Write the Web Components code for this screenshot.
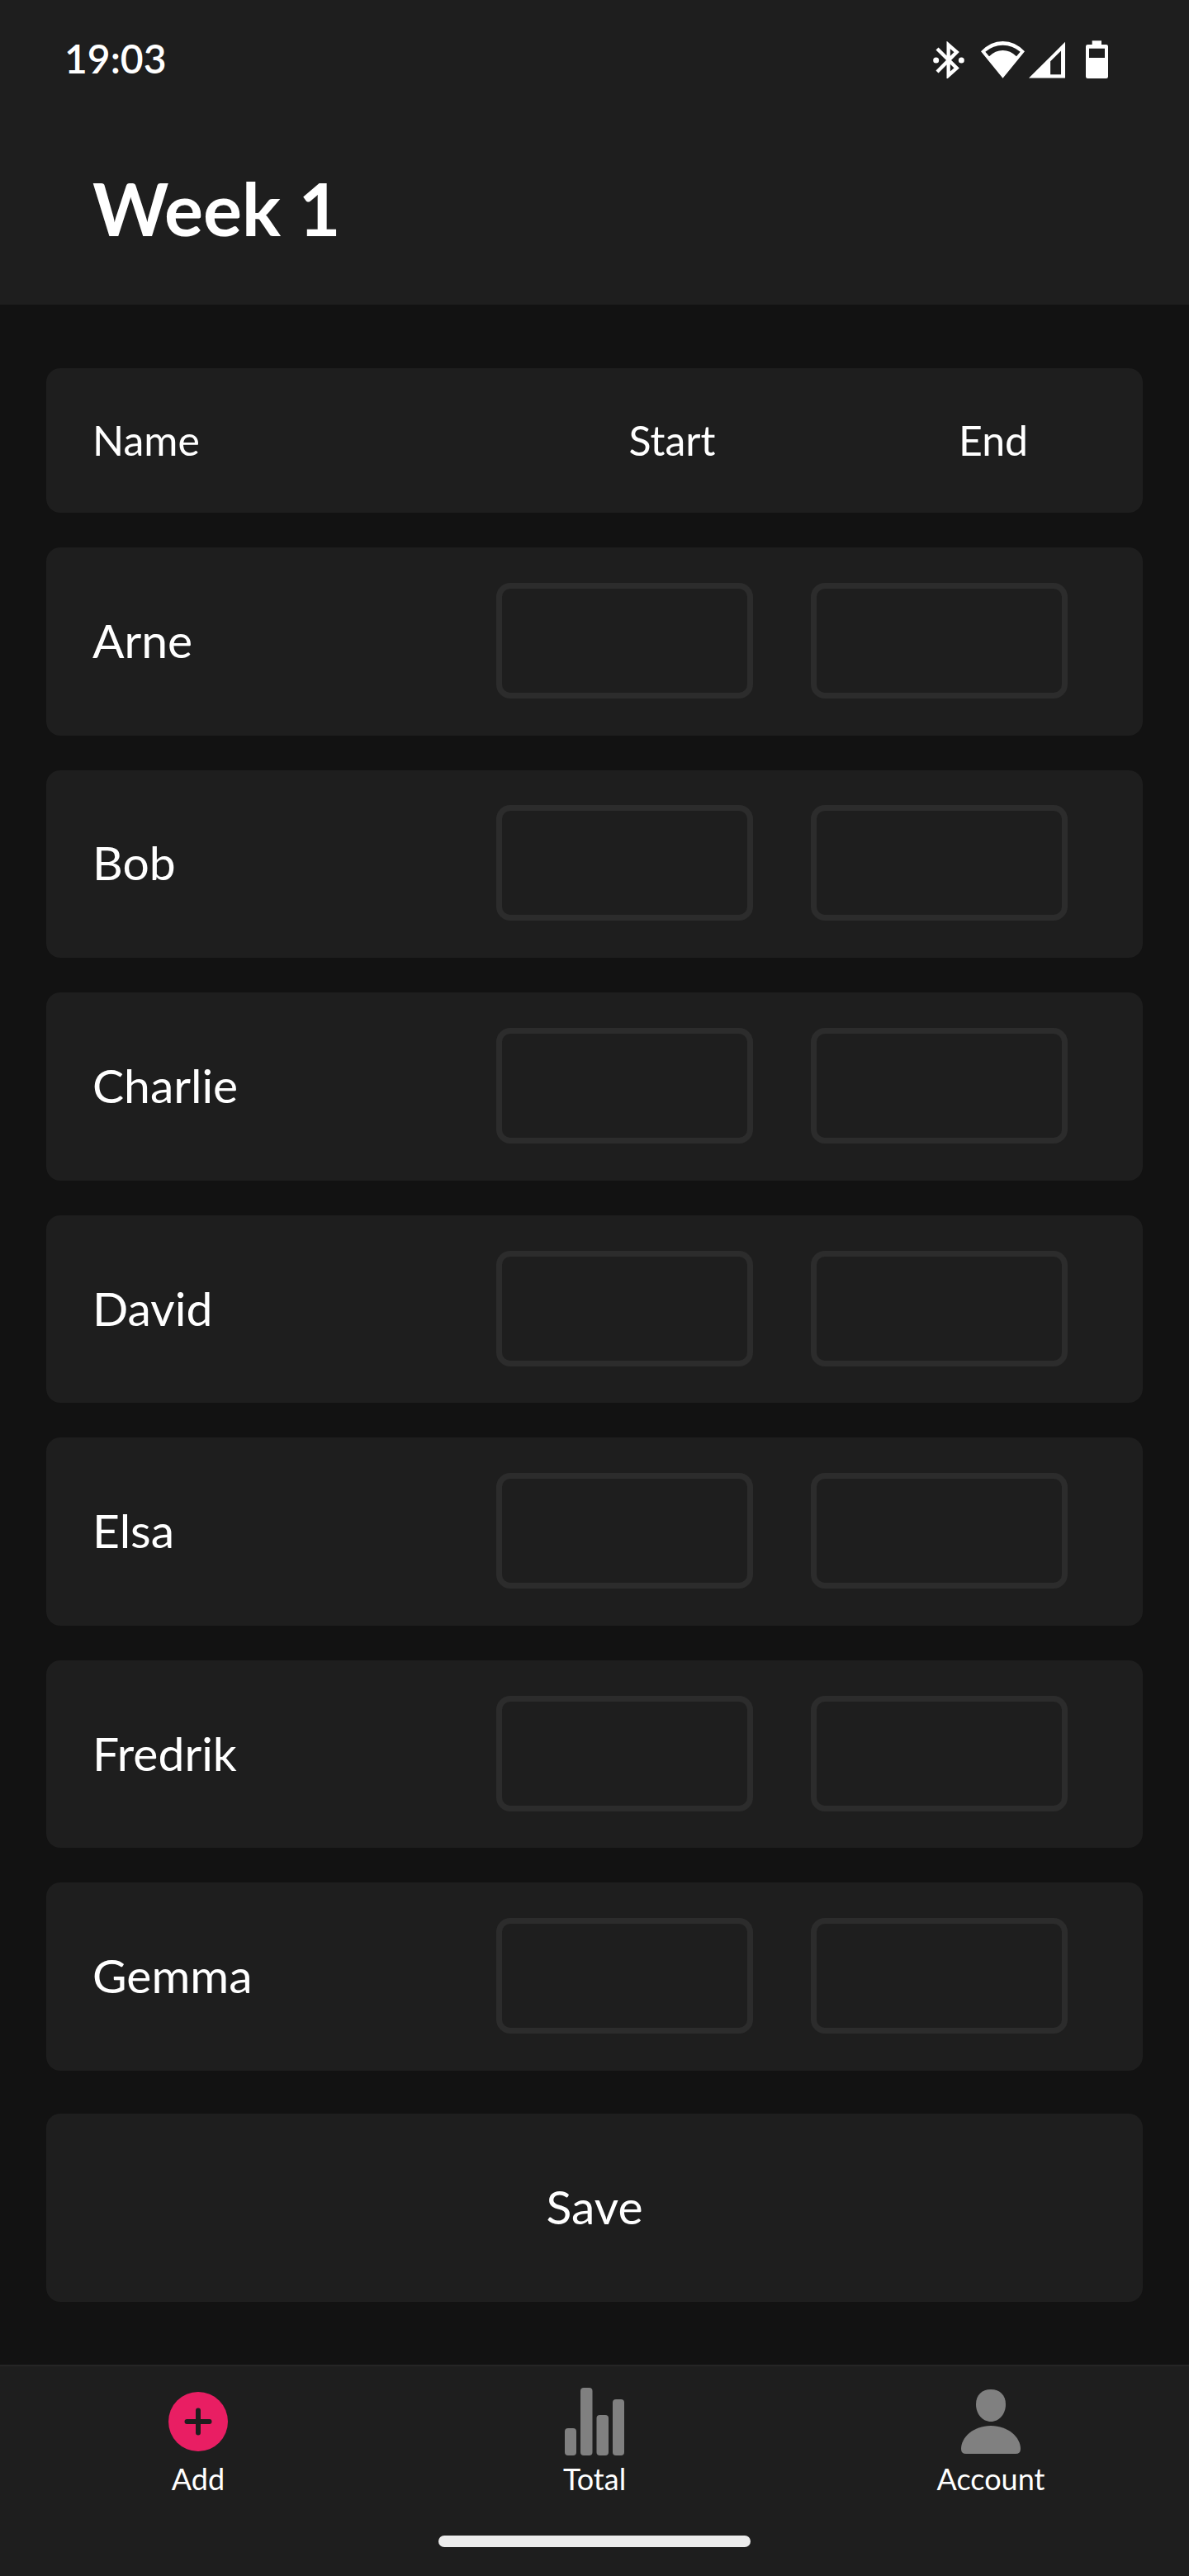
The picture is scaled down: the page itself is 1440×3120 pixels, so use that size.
<!DOCTYPE html>
<html lang="en">
<head>
<meta charset="utf-8">
<meta name="viewport" content="width=device-width, initial-scale=1">
<title>Week 1</title>
<style>
  :root {
    --bg: #121212;
    --surface: #1e1e1e;
    --line: #2c2c2c;
    --accent: #e91e63;
    --muted: #808080;
    --radius: 17px;
  }
  body {
    margin: 0;
    background: var(--bg);
    color: #fff;
    font-family: Lato, "Open Sans", sans-serif;
  }
</style>
</head>
<body>
<week-app>
  <status-bar slot="top" time="19:03"></status-bar>
  <app-title slot="top">Week 1</app-title>
  <column-heads></column-heads>
  <score-row name="Arne"></score-row>
  <score-row name="Bob"></score-row>
  <score-row name="Charlie"></score-row>
  <score-row name="David"></score-row>
  <score-row name="Elsa"></score-row>
  <score-row name="Fredrik"></score-row>
  <score-row name="Gemma"></score-row>
  <save-button slot="action">Save</save-button>
  <tab-bar slot="bottom">
    <tab-item href="#add" current>
      <svg slot="icon" width="72" height="84" viewBox="0 0 72 84" aria-hidden="true">
        <circle cx="36" cy="43" r="36" fill="#e91e63"/>
        <path d="M36 29.500V56.500M22.500 43H49.500" stroke="#1e1e1e" stroke-width="6" stroke-linecap="round"/>
      </svg>
      Add
    </tab-item>
    <tab-item href="#total">
      <svg slot="icon" width="72" height="84" viewBox="0 0 72 84" fill="#808080" aria-hidden="true">
        <rect x="0" y="51" width="14" height="33" rx="4"/>
        <rect x="19" y="2" width="14.500" height="82" rx="4"/>
        <rect x="38.500" y="35" width="14.500" height="49" rx="4"/>
        <rect x="58" y="16" width="14" height="68" rx="4"/>
      </svg>
      Total
    </tab-item>
    <tab-item href="#account">
      <svg slot="icon" width="72" height="84" viewBox="0 0 72 84" fill="#808080" aria-hidden="true">
        <path d="M36 4C47 4 54 11 54 22C54 34 46 43 36 43S18 34 18 22C18 11 25 4 36 4Z"/>
        <path d="M36 48C57 48 72 62 72 76Q72 82 66 82H6Q0 82 0 76C0 62 15 48 36 48Z"/>
      </svg>
      Account
    </tab-item>
  </tab-bar>
</week-app>

<script>
  const define = (name, html, setup) => {
    const template = document.createElement('template');
    template.innerHTML = html;
    customElements.define(name, class extends HTMLElement {
      constructor() {
        super();
        this.attachShadow({ mode: 'open' }).append(template.content.cloneNode(true));
      }
      connectedCallback() {
        if (setup) setup(this, this.shadowRoot);
      }
    });
  };

  define('week-app', `
    <style>
      :host { display: flex; flex-direction: column; min-height: 100vh; }
      header, footer { background: var(--surface); }
      main {
        flex: 1; display: flex; flex-direction: column; gap: 52px;
        box-sizing: border-box; padding: 77px 56px 76px;
      }
      .rows {
        flex: 1; display: grid; gap: 42px;
        grid-template-rows: auto; grid-auto-rows: 1fr;
      }
    </style>
    <header><slot name="top"></slot></header>
    <main>
      <div class="rows"><slot></slot></div>
      <slot name="action"></slot>
    </main>
    <footer><slot name="bottom"></slot></footer>
  `);

  define('status-bar', `
    <style>
      :host {
        display: flex; align-items: center; justify-content: space-between;
        box-sizing: border-box; height: 144px; padding: 0 98px 0 78px;
      }
      time { font-size: 48px; line-height: 60px; font-weight: 600; padding-bottom: 2px; }
      .icons { display: flex; align-items: center; }
      .wifi { margin-left: 20px; }
      .signal { margin-left: 5px; }
      .battery { margin-left: 25px; }
      svg { display: block; }
    </style>
    <time></time>
    <div class="icons">
      <svg width="38" height="45" viewBox="90 60 114 135" role="img" aria-label="Bluetooth">
        <path d="M105 87L176 157L146 184V73L176 99L105 171" fill="none" stroke="#fff" stroke-width="13"/>
        <circle cx="101" cy="129" r="10.500" fill="#fff"/>
        <circle cx="193" cy="129" r="10.500" fill="#fff"/>
      </svg>
      <svg class="wifi" width="53" height="45" viewBox="264 60 159 135" role="img" aria-label="Wi-Fi">
        <path fill-rule="evenodd" fill="#fff" d="M343.500 194L264 97Q298 60 343.500 60T423 97ZM280 98L294 115Q316 93 343.500 93T393 115L407 98Q378 74 343.500 74T280 98Z"/>
      </svg>
      <svg class="signal" width="44" height="45" viewBox="437 60 133 135" role="img" aria-label="Mobile signal">
        <path fill-rule="evenodd" fill="#fff" d="M570 62V194H437ZM555 94L516 133V181H555Z"/>
      </svg>
      <svg class="battery" width="27" height="46" viewBox="645 56 81 138" role="img" aria-label="Battery">
        <path fill-rule="evenodd" fill="#fff" d="M668 57H702V71H719Q726 71 726 78V187Q726 194 719 194H652Q645 194 645 187V78Q645 71 652 71H668ZM657 85V119H714V85Z"/>
      </svg>
    </div>
  `, (el, root) => { root.querySelector('time').textContent = el.getAttribute('time'); });

  define('app-title', `
    <style>
      :host { display: block; padding: 56px 112px 65px; }
      h1 { margin: 0; font-size: 88px; line-height: 104px; font-weight: 700; }
    </style>
    <h1><slot></slot></h1>
  `);

  define('column-heads', `
    <style>
      :host {
        display: flex; align-items: center; box-sizing: border-box;
        height: 175px; padding: 0 56px 2px;
        background: var(--surface); border-radius: var(--radius);
        font-size: 50px; line-height: 60px;
      }
      .name { flex: 1; }
      .cell { flex: 0 1 250px; text-align: center; }
      .cell + .cell { margin-left: 139px; }
    </style>
    <span class="name">Name</span>
    <span class="cell">Start</span>
    <span class="cell">End</span>
  `);

  define('score-row', `
    <style>
      :host {
        display: flex; align-items: center; gap: 70px;
        box-sizing: border-box; padding: 41px 91px 43px 56px;
        background: var(--surface); border-radius: var(--radius);
      }
      label { flex: 1; font-size: 57px; line-height: 68px; padding-bottom: 2px; }
      input {
        flex: 0 1 311px; min-width: 0; width: 311px; height: 140px;
        box-sizing: border-box; margin: 0; padding: 0 28px;
        border: 7px solid var(--line); border-radius: var(--radius);
        background: transparent; color: inherit; font: inherit;
        font-size: 50px; text-align: center; outline: none;
      }
      input:focus { border-color: var(--accent); }
    </style>
    <label for="start"></label>
    <input id="start" type="text" inputmode="numeric">
    <input id="end" type="text" inputmode="numeric">
  `, (el, root) => {
    const name = el.getAttribute('name');
    root.querySelector('label').textContent = name;
    root.querySelector('#start').setAttribute('aria-label', name + ' start');
    root.querySelector('#end').setAttribute('aria-label', name + ' end');
  });

  define('save-button', `
    <style>
      :host { display: block; }
      button {
        display: block; width: 100%; height: 228px; margin: 0; padding: 0 0 4px;
        border: 0; border-radius: var(--radius); background: var(--surface);
        color: inherit; font: inherit; font-size: 57px; line-height: 68px; cursor: pointer;
      }
    </style>
    <button type="button"><slot></slot></button>
  `);

  define('tab-bar', `
    <style>
      :host { display: block; border-top: 2px solid #252525; }
      nav { display: grid; grid-template-columns: repeat(3, 1fr); padding-top: 24px; }
      .handle {
        width: 378px; height: 14px; margin: 47px auto 35px;
        border-radius: 7px; background: #ececec;
      }
    </style>
    <nav><slot></slot></nav>
    <div class="handle"></div>
  `);

  define('tab-item', `
    <style>
      :host { display: block; }
      a {
        display: flex; flex-direction: column; align-items: center; gap: 6px;
        color: inherit; text-decoration: none; font-size: 36px; line-height: 44px;
      }
      ::slotted(svg) { display: block; }
    </style>
    <a><slot name="icon"></slot><span><slot></slot></span></a>
  `, (el, root) => {
    const link = root.querySelector('a');
    link.href = el.getAttribute('href');
    if (el.hasAttribute('current')) link.setAttribute('aria-current', 'page');
  });
</script>
</body>
</html>
